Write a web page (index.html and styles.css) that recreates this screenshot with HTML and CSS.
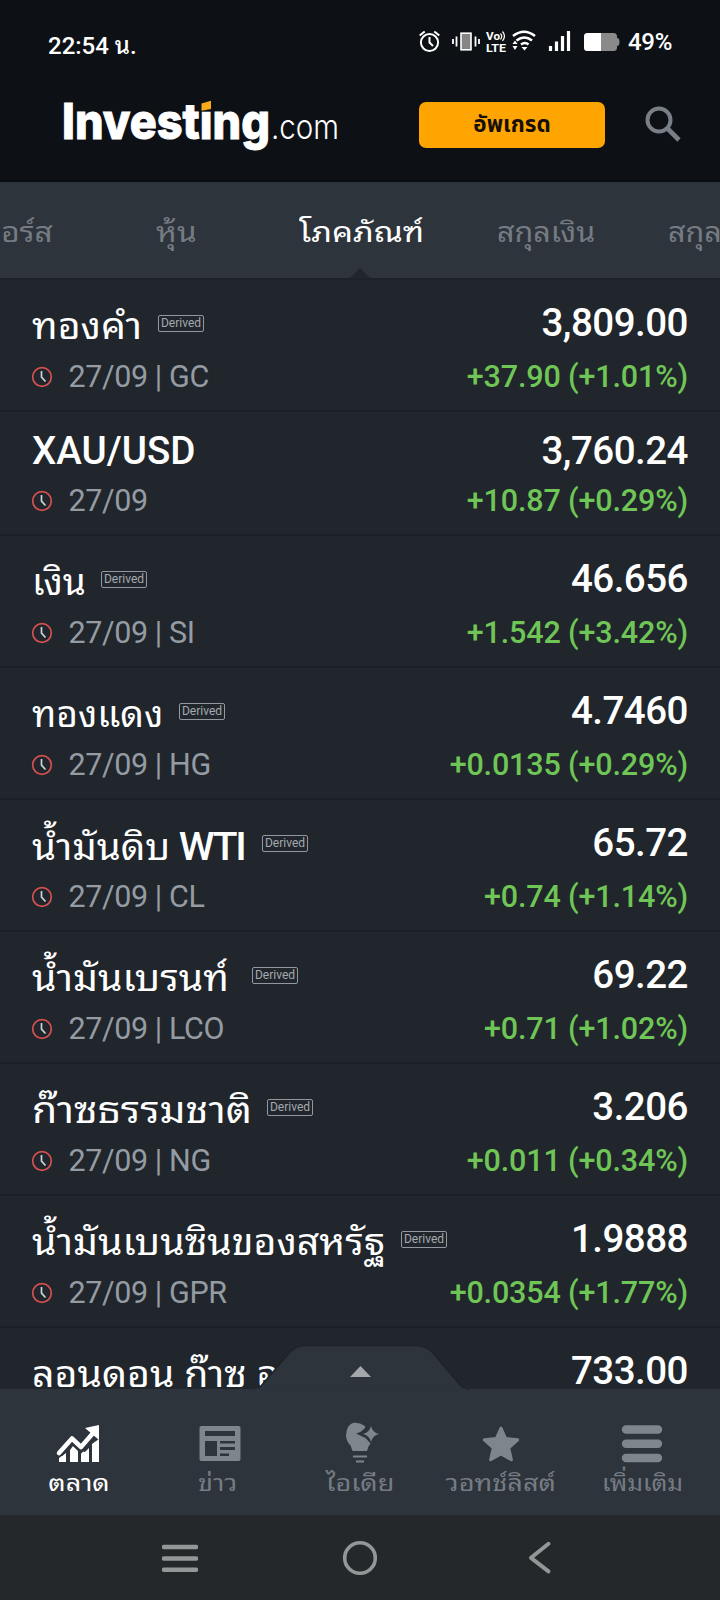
FILE: index.html
```html
<!DOCTYPE html>
<html lang="th">
<head>
<meta charset="utf-8">
<title>Investing.com</title>
<link rel="stylesheet" href="styles.css">
</head>
<body>
<svg width="0" height="0" class="defs">
  <symbol id="clock" viewBox="0 0 22 22"><circle cx="11" cy="11" r="9.3" fill="none" stroke="#d5504f" stroke-width="1.7"/><path d="M10.5 5v6.2l4 4.3" fill="none" stroke="#c9d3d8" stroke-width="1.7"/></symbol>
</svg>
<div class="phone">
  <div class="status">
    <span class="time">22:54 น.</span>
    <svg class="status-icons" width="210" height="24" viewBox="0 0 210 24" fill="none" stroke="#fff">
      <circle cx="11.500" cy="12.5" r="8.6" stroke-width="2"/><path d="M11.500 7v5.500l3.500 3.500" stroke-width="2"/><path d="M1.700 5.500l5-4M21.300 5.500l-5-4" stroke-width="2"/>
      <rect x="43" y="3.200" width="10" height="16.600" fill="#858585" stroke-width="1.600"/><path d="M38.500 6.500v10M57.500 6.500v10M35 9v5M61 9v5" stroke-width="1.800"/>
      <g fill="#fff" stroke="none" class="volte"><text x="68" y="10" textLength="14" lengthAdjust="spacingAndGlyphs">Vo</text><text x="68" y="21.500" textLength="20" lengthAdjust="spacingAndGlyphs">LTE</text></g>
      <path d="M82.500 3.500q2.500 3 0 6M84.500 1.500q4 4.500 0 9.500" stroke-width="1.200"/>
      <path d="M95 6q11-8.500 22 0M98.500 10.500q8-6 15.500 0M103 14.500q4-3 7.500 0" stroke-width="2.600"/><path d="M106.500 20.500l-3-3.500h6zM94.500 14h5l-2.500-3.500zM94.500 16h5l-2.500 4z" fill="#fff" stroke="none"/>
      <path d="M132.500 16v5M138.500 11.500v9.500M144.500 6v15M150.500 1v20" stroke-width="3.200"/>
      <rect x="166" y="3" width="33" height="18" rx="3.500" fill="#8a8a8a" stroke="none"/><path d="M199 8q2.500 0 2.500 4t-2.500 4z" fill="#8a8a8a" stroke="none"/><path d="M169.500 3H183v18h-13.500q-3.500 0-3.500-3.500v-11q0-3.500 3.500-3.500z" fill="#fff" stroke="none"/>
    </svg>
    <span class="pct">49%</span>
  </div>
  <header class="header">
    <svg class="logo" width="280" height="56" viewBox="0 0 280 56">
      <text class="logo-main" x="-2" y="43" textLength="208" lengthAdjust="spacingAndGlyphs">Investing</text>
      <path d="M135 3h15v12.500h-15z" fill="#0d1116"/><path d="M137.500 7.500l9.500-2.800v8.300l-9.500 1.700z" fill="#f9ab1b"/>
      <text class="logo-com" x="207" y="43" textLength="68" lengthAdjust="spacingAndGlyphs">.com</text>
    </svg>
    <button class="upgrade">อัพเกรด</button>
    <svg class="search" width="36" height="36" viewBox="0 0 36 36" fill="none" stroke="#797f87"><circle cx="14" cy="14" r="11.500" stroke-width="4"/><path d="M22 22l12 12" stroke-width="4.600"/></svg>
  </header>
  <nav class="tabs">
    <span class="tab t1">อร์ส</span><span class="tab t2">หุ้น</span><span class="tab t3 on">โภคภัณฑ์</span><span class="tab t4">สกุลเงิน</span><span class="tab t5">สกุลเงิน</span>
    <i class="notch"></i>
  </nav>
  <main class="list">
    <div class="row"><div class="l"><div class="name n1"><span>ทองคำ</span><b>Derived</b></div><div class="sub"><svg><use href="#clock"/></svg>27/09 | GC</div></div><div class="r"><div class="price">3,809.00</div><div class="chg">+37.90 (+1.01%)</div></div></div>
    <div class="row short"><div class="l"><div class="name"><span class="latin">XAU/USD</span></div><div class="sub"><svg><use href="#clock"/></svg>27/09</div></div><div class="r"><div class="price">3,760.24</div><div class="chg">+10.87 (+0.29%)</div></div></div>
    <div class="row"><div class="l"><div class="name n3"><span>เงิน</span><b>Derived</b></div><div class="sub"><svg><use href="#clock"/></svg>27/09 | SI</div></div><div class="r"><div class="price">46.656</div><div class="chg">+1.542 (+3.42%)</div></div></div>
    <div class="row"><div class="l"><div class="name n4"><span>ทองแดง</span><b>Derived</b></div><div class="sub"><svg><use href="#clock"/></svg>27/09 | HG</div></div><div class="r"><div class="price">4.7460</div><div class="chg">+0.0135 (+0.29%)</div></div></div>
    <div class="row"><div class="l"><div class="name n5"><span>น้ำมันดิบ <em>WTI</em></span><b>Derived</b></div><div class="sub"><svg><use href="#clock"/></svg>27/09 | CL</div></div><div class="r"><div class="price">65.72</div><div class="chg">+0.74 (+1.14%)</div></div></div>
    <div class="row"><div class="l"><div class="name n6"><span>น้ำมันเบรนท์</span><b>Derived</b></div><div class="sub"><svg><use href="#clock"/></svg>27/09 | LCO</div></div><div class="r"><div class="price">69.22</div><div class="chg">+0.71 (+1.02%)</div></div></div>
    <div class="row"><div class="l"><div class="name n7"><span>ก๊าซธรรมชาติ</span><b>Derived</b></div><div class="sub"><svg><use href="#clock"/></svg>27/09 | NG</div></div><div class="r"><div class="price">3.206</div><div class="chg">+0.011 (+0.34%)</div></div></div>
    <div class="row"><div class="l"><div class="name n8"><span>น้ำมันเบนซินของสหรัฐ</span><b>Derived</b></div><div class="sub"><svg><use href="#clock"/></svg>27/09 | GPR</div></div><div class="r"><div class="price">1.9888</div><div class="chg">+0.0354 (+1.77%)</div></div></div>
    <div class="row"><div class="l"><div class="name n9"><span>ลอนดอน ก๊าซ ออยล์</span></div></div><div class="r"><div class="price">733.00</div></div></div>
  </main>
  <nav class="bottom">
    <svg class="handle" width="216" height="46" viewBox="0 0 216 46"><path d="M0 46q4 0 8-4L37 8Q44 1.500 52 1.500H164q8 0 15 6.500l29 34q4 4 8 4z" fill="#2d343b" stroke="#1d2429" stroke-width="1.500"/><path d="M2 44.500h212v2H2z" fill="#2d343b"/><path d="M107.500 22l10.500 11H97z" fill="#a5a8ab"/></svg>
    <div class="item on i1"><svg width="44" height="40" viewBox="0 0 44 40"><path d="M2 38v-4l7-5v9zM13 38V26l3-4 5 5v11zM24 38V27l4 1 4-4v14zM35 38V20l7-5v23z" fill="#fff"/><path d="M2 29L15 14.500 24 23 37 8" fill="none" stroke="#2d343b" stroke-width="9"/><path d="M2 29L15 14.500 24 23 37 8" fill="none" stroke="#fff" stroke-width="4.500" stroke-linejoin="round" stroke-linecap="round"/><path d="M28 4l14-3v15z" fill="#fff"/></svg><span>ตลาด</span></div>
    <div class="item i2"><svg width="44" height="40" viewBox="0 0 44 40"><rect x="1.500" y="2" width="41" height="35" rx="2" fill="#7f858d"/><path d="M7 7h30v5H7zM7 17h12v15H7zM22 17h15v2.500H22zM22 23h15v3H22zM22 29.500h9V32h-9z" fill="#2d343b"/></svg><span>ข่าว</span></div>
    <div class="item i3"><svg width="44" height="40" viewBox="0 0 44 40" fill="#7f858d"><path d="M27 2Q21-2 15.500-1.200 8.500 1 8 11q0 6 4.500 10.500l2 5.500h14.500l1.500-4.500 2-3-5-5.500L18 9.500q5-1 9-5.500z"/><path d="M33 2q1.500 6.500 8 8-6.500 1.500-8 8-1.500-6.500-8-8 6.500-1.500 8-8z"/><path d="M15 31.500h14v2H15zM18 36.500h8v2h-8z"/></svg><span>ไอเดีย</span></div>
    <div class="item i4"><svg width="44" height="40" viewBox="0 0 44 40"><path d="M22 4l4.700 10.500 12 1.300-9 8 2.700 12L22 30l-10.400 5.800 2.700-12-9-8 12-1.300z" fill="#7f858d" stroke="#7f858d" stroke-width="3" stroke-linejoin="round"/></svg><span>วอทช์ลิสต์</span></div>
    <div class="item i5"><svg width="44" height="40" viewBox="0 0 44 40"><path d="M5 5.500h32M5 19.700h32M5 34h32" stroke="#7f858d" stroke-width="8.400" stroke-linecap="round"/></svg><span>เพิ่มเติม</span></div>
  </nav>
  <div class="system">
    <svg width="36" height="36" viewBox="0 0 36 36"><path d="M2 7h32M2 18.500h32M2 29.700h32" stroke="#949798" stroke-width="4.500" stroke-linecap="round"/></svg>
    <svg width="36" height="36" viewBox="0 0 36 36"><circle cx="18" cy="18" r="15.300" fill="none" stroke="#949798" stroke-width="3.600"/></svg>
    <svg width="36" height="36" viewBox="0 0 36 36"><path d="M26.500 3.800L9 17.800l17.500 13.500" fill="none" stroke="#949798" stroke-width="4" stroke-linecap="round" stroke-linejoin="round"/></svg>
  </div>
</div>
</body>
</html>
```
FILE: styles.css
```css
* { box-sizing: border-box; }
body { margin: 0; background: #20262c; font-family: Roboto, "Noto Sans Thai Looped", Loma, Garuda, Umpush, Waree, "Droid Sans Thai", "Droid Sans Fallback", "Noto Sans Thai", "Noto Sans", sans-serif; color: #fff; }
.defs { position: absolute; }
.phone { width: 720px; height: 1600px; display: flex; flex-direction: column; overflow: hidden; }
.status { height: 88px; flex: none; background: #0d1116; display: flex; padding-left: 48px; }
.time { width: 370px; font-size: 24px; font-weight: 500; line-height: 28px; padding-top: 32px; white-space: nowrap; }
.status-icons { flex: none; margin-top: 30px; }
.volte { font: 700 11px Roboto, sans-serif; }
.pct { font-size: 24px; font-weight: 500; line-height: 28px; padding-top: 28px; letter-spacing: -0.3px; }
.header { height: 94px; flex: none; background: #0d1116; border-bottom: 2px solid #090c11; display: flex; padding-left: 64px; }
.logo { margin-top: 8px; flex: none; overflow: visible; }
.logo-main { font: 800 50px Inter, sans-serif; fill: #fff; stroke: #fff; stroke-width: 1; }
.logo-com { font: 300 34px Inter, sans-serif; fill: #fff; }
.upgrade { margin: 14px 0 0 75px; width: 186px; height: 46px; border: 0; border-radius: 7px; background: #ffa502; color: #171008; font: 700 22.500px/42px "Noto Sans Thai", "Noto Sans", sans-serif; padding: 0; }
.search { margin: 18px 0 0 40px; }
.tabs { height: 98px; flex: none; background: #2d343b; border-bottom: 2px solid #1c2227; display: flex; position: relative; white-space: nowrap; overflow: hidden; font-size: 28px; line-height: 101px; color: #757b83; }
.tab { flex: none; transform-origin: left; }
.t1 { width: 156px; padding-left: 1px; transform: scaleX(1.13); }
.t2 { width: 143px; transform: scaleX(1.13); }
.t3 { width: 198px; transform: scaleX(1.18); }
.t4 { width: 171px; transform: scaleX(1.09); }
.t5 { transform: scaleX(1.09); }
.on { color: #fff; }
.notch { position: absolute; left: 350px; bottom: 0; border: 10px solid transparent; border-top: 0; border-bottom-color: #20262c; }
.list { height: 1109px; flex: none; overflow: hidden; background: #20262c; }
.row { height: 132px; border-bottom: 2px solid #1a2025; display: flex; justify-content: space-between; padding: 0 32px; }
.name { height: 78px; padding-top: 23px; display: flex; white-space: nowrap; font-size: 36px; line-height: 48px; }
.name span { transform-origin: left; }
.name em { font-style: normal; font-weight: 500; font-size: 38px; letter-spacing: -2px; margin-left: -1px; }
.name .latin { font-weight: 500; font-size: 38.500px; }
.n1 span { width: 109px; transform: scaleX(1.09); }
.n3 span { width: 52px; transform: scaleX(1.03); }
.n4 span { width: 130px; transform: scaleX(1.03); }
.n5 span { width: 213px; transform: scaleX(1.07); }
.n6 span { width: 203px; transform: scaleX(1.09); }
.n7 span { width: 218px; transform: scaleX(1.14); }
.n8 span { width: 352px; transform: scaleX(1.09); }
.n9 span { transform: scaleX(1.09); }
.name b { width: 46px; height: 17px; margin: 12px 0 0 17px; border: 1px solid #9298a0; border-radius: 2px; font-size: 12px; line-height: 15px; font-weight: 400; text-align: center; color: #a4a9ae; }
.sub { display: flex; font-size: 30.500px; line-height: 36px; color: #959ba3; white-space: nowrap; letter-spacing: -0.400px; padding-top: 1px; }
.sub svg { width: 22px; height: 22px; margin: 7px 15.500px 0 -1px; }
.r { text-align: right; }
.price { height: 79px; padding-top: 19px; font-size: 38.500px; line-height: 48px; font-weight: 500; letter-spacing: -0.500px; }
.chg { font-size: 30.500px; line-height: 36px; font-weight: 500; color: #6fc556; letter-spacing: -0.150px; }
.short { height: 124px; }
.short .name { height: 70px; padding-top: 15px; }
.short .price { height: 71px; padding-top: 15px; }
.bottom { height: 126px; flex: none; background: #2d343b; position: relative; display: flex; color: #757b83; font-size: 23px; }
.handle { position: absolute; left: 253px; top: -45px; }
.item { width: 140px; display: flex; flex-direction: column; align-items: center; padding-top: 35px; white-space: nowrap; }
.item svg { flex: none; overflow: visible; }
.item span { line-height: 34px; height: 34px; margin-top: 3px; transform: scaleX(1.18); }
.i1 { width: 157px; } .i2 { width: 126px; } .i3 { width: 154px; } .i4 { width: 128px; } .i5 { width: 155px; }
.i2 span { margin-right: 5px; }
.i5 span { transform: scaleX(1.08); }
.system { height: 85px; flex: none; background: #24282b; display: flex; justify-content: space-between; padding: 25px 162px 0; }
```
